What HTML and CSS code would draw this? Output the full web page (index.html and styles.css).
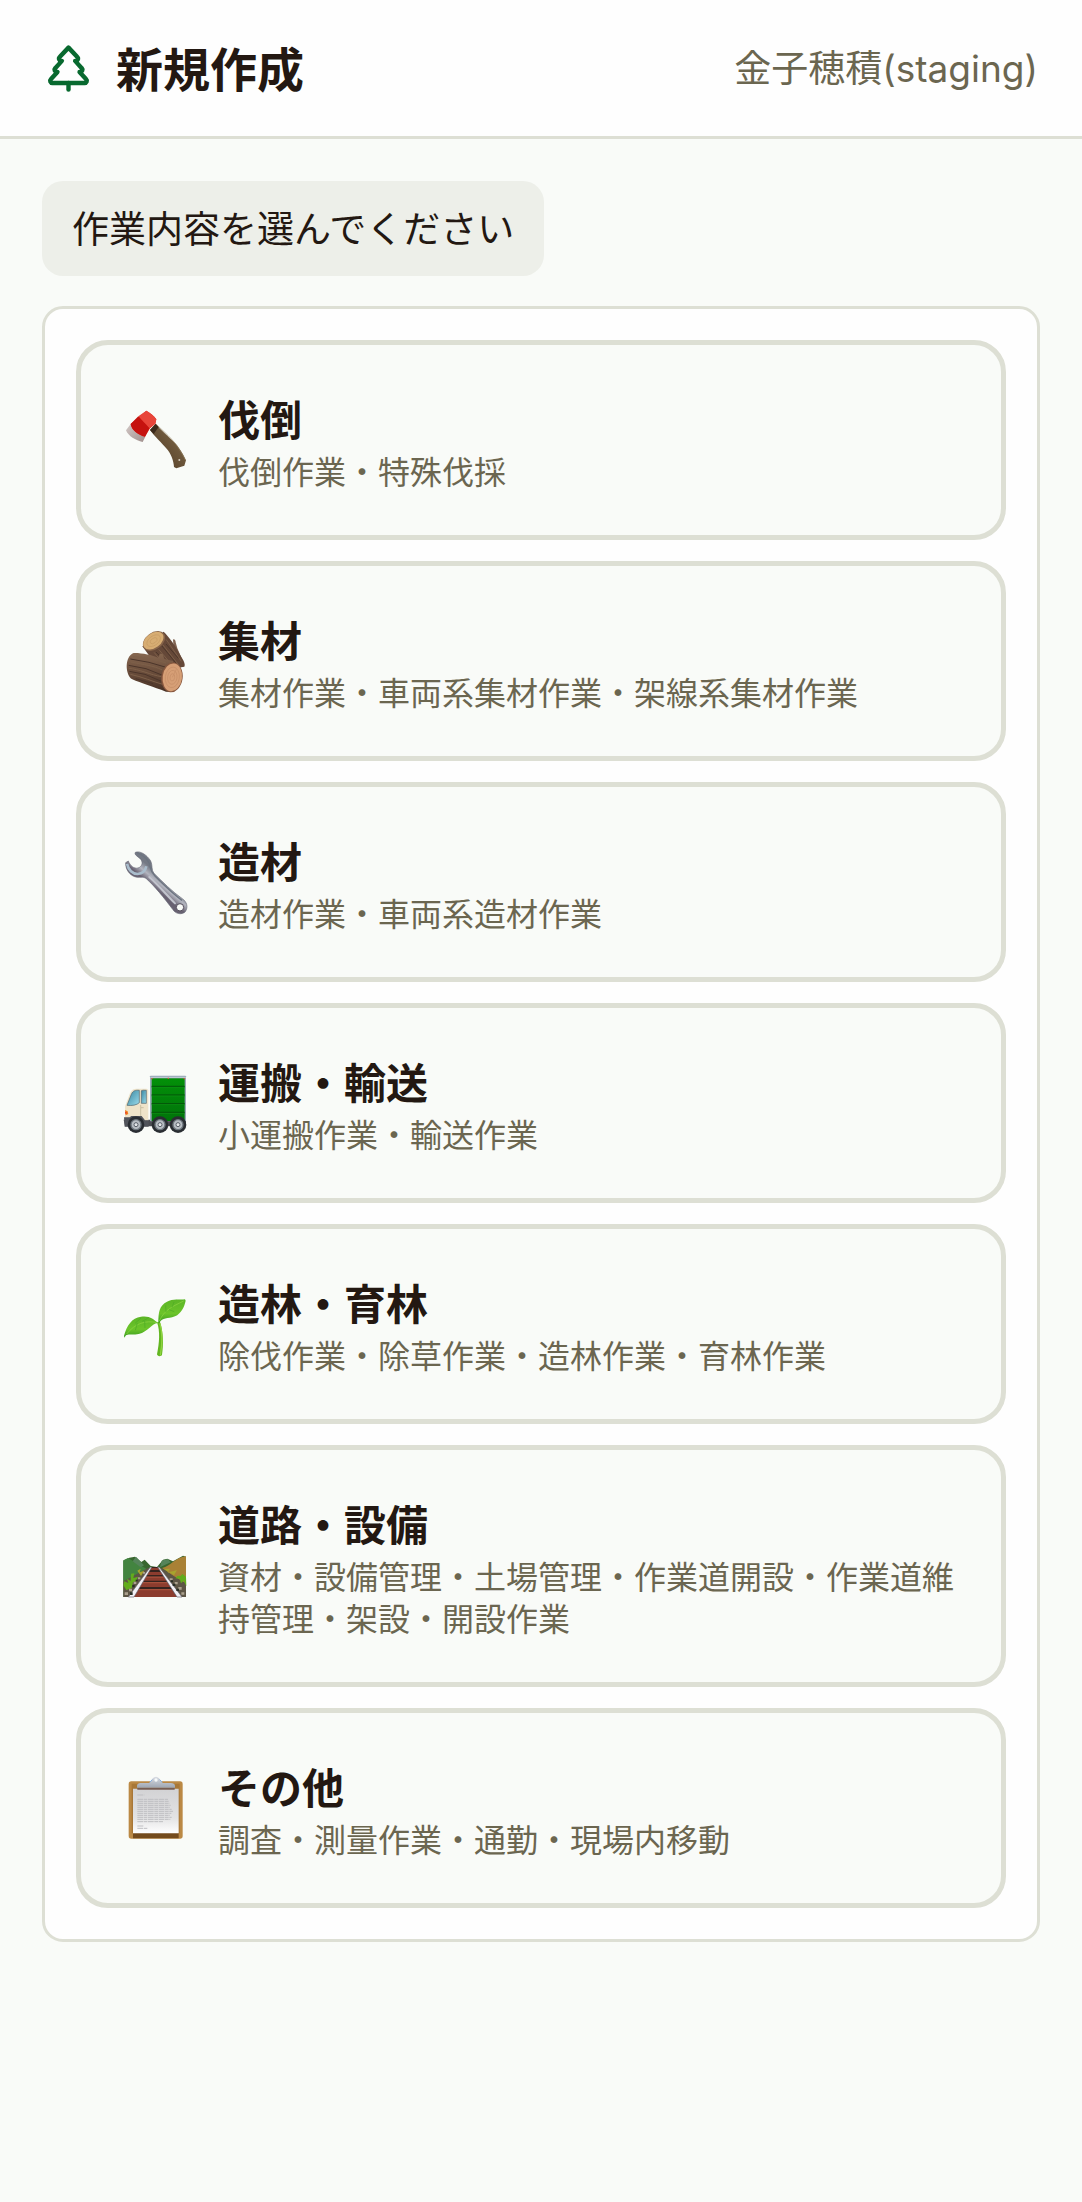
FILE: index.html
```html
<!DOCTYPE html>
<html lang="ja">
<head>
  <meta charset="utf-8">
  <meta name="viewport" content="width=device-width, initial-scale=1">
  <title>新規作成</title>
  <link rel="stylesheet" href="styles.css">
</head>
<body>
  <header class="header">
    <svg class="header-icon" viewBox="0 0 24 24" aria-hidden="true">
      <path d="m17 14 3 3.3a1 1 0 0 1-.7 1.7H4.7a1 1 0 0 1-.7-1.7L7 14h-.3a1 1 0 0 1-.7-1.7L9 9h-.2A1 1 0 0 1 8 7.3L12 3l4 4.3a1 1 0 0 1-.8 1.7H15l3 3.3a1 1 0 0 1-.7 1.7H17Z"/>
      <path d="M12 22v-3"/>
    </svg>
    <h1 class="header-title">新規作成</h1>
    <span class="user-name">金子穂積<span class="user-env">(staging)</span></span>
  </header>

  <main class="content">
    <p class="message">作業内容を選んでください</p>

    <div class="panel">
      <button type="button" class="work-item">
        <svg class="work-icon" viewBox="38 58 189 189" aria-hidden="true">
          <defs>
            <linearGradient id="axeHandle" x1="0" y1="1" x2="1" y2="0">
              <stop offset="0" stop-color="#4b3520"/>
              <stop offset="1" stop-color="#86704f"/>
            </linearGradient>
            <linearGradient id="axeEdge" x1="0" y1="0" x2="1" y2="1">
              <stop offset="0" stop-color="#d3c9c7"/>
              <stop offset="1" stop-color="#a08f8c"/>
            </linearGradient>
          </defs>
          <path d="M119 121 136 102C150 120 175 140 196 162 212 181 222 200 227 212L222 228 198 236 191 232C190 211 181 191 169 177 154 160 132 139 119 121Z" fill="url(#axeHandle)"/>
          <path d="M119 121 136 102 145 112 130 133Z" fill="#3b2a1b"/>
          <path d="M137 103C160 126 187 148 203 173 213 188 221 203 225 211" fill="none" stroke="#93805f" stroke-width="3" opacity=".6"/>
          <circle cx="207" cy="211" r="3" fill="#d5cabb"/>
          <path d="M61 103C64 122 83 136 105 141L97 157C76 152 54 140 47 122Z" fill="url(#axeEdge)"/>
          <path d="M108 63C119 70 131 77 138 89L135 102 119 116 104 141C83 136 64 122 61 103Z" fill="#d8261c"/>
          <path d="M84 80 108 63C119 70 131 77 138 89L135 102 117 116C106 103 93 91 84 80Z" fill="#e8453a"/>
          <path d="M61 103 84 80C93 91 106 103 117 116L104 141C83 136 64 122 61 103Z" fill="#c5120f"/>
        </svg>
        <span class="work-text">
          <span class="work-title">伐倒</span>
          <span class="work-desc">伐倒作業・特殊伐採</span>
        </span>
      </button>

      <button type="button" class="work-item">
        <svg class="work-icon" viewBox="38 45 189 189" aria-hidden="true">
          <defs>
            <linearGradient id="logBark" x1="0" y1="0" x2="0" y2="1">
              <stop offset="0" stop-color="#866750"/>
              <stop offset=".5" stop-color="#6a4d3b"/>
              <stop offset="1" stop-color="#463025"/>
            </linearGradient>
          </defs>
          <path d="M188 74C192 71 196 76 196 82L201 100 214 130 200 126 190 100Z" fill="#806452"/>
          <path d="M96 94 160 50C175 65 197 93 210 121 220 137 226 148 222 155L195 160 130 140Z" fill="#654838"/>
          <path d="M131 112 172 160M145 103 189 155M158 90 205 150M167 73 213 139" stroke="#7d5f48" stroke-width="3"/>
          <path d="M137 111 177 153M154 92 199 147M167 87 204 130" stroke="#4c362a" stroke-width="3"/>
          <ellipse cx="131" cy="78" rx="37" ry="25" transform="rotate(-36 131 78)" fill="#876449"/>
          <ellipse cx="129" cy="77" rx="34" ry="22" transform="rotate(-36 129 77)" fill="#d7ad73"/>
          <ellipse cx="130" cy="77" rx="23" ry="14" transform="rotate(-36 130 77)" fill="none" stroke="#c79b63" stroke-width="2"/>
          <ellipse cx="130" cy="77" rx="12" ry="7" transform="rotate(-36 130 77)" fill="none" stroke="#c79b63" stroke-width="2"/>
          <path d="M70 114C91 113 126 120 143 128L149 116 157 117 162 132 188 138 187 231 167 230C129 216 91 204 66 193 44 181 42 124 70 114Z" fill="url(#logBark)"/>
          <path d="M68 125C104 127 139 134 167 144M62 141C102 150 128 151 156 165M55 160C85 162 123 180 153 185M60 178C95 185 128 200 157 208" fill="none" stroke="#7d6049" stroke-width="3"/>
          <path d="M60 132 116 142 164 156M55 151 107 161 157 181M57 169 104 178 158 201M76 191 128 206" fill="none" stroke="#4b352a" stroke-width="3"/>
          <ellipse cx="185" cy="187" rx="32" ry="45" transform="rotate(8 185 187)" fill="#88583f"/>
          <ellipse cx="186" cy="187" rx="29" ry="42" transform="rotate(8 186 187)" fill="#d69f76"/>
          <g fill="none" stroke="#c48d66" stroke-width="2">
            <ellipse cx="186" cy="187" rx="21" ry="31" transform="rotate(8 186 187)"/>
            <ellipse cx="186" cy="187" rx="14" ry="21" transform="rotate(8 186 187)"/>
            <ellipse cx="186" cy="187" rx="7" ry="11" transform="rotate(8 186 187)"/>
            <path d="M186 187 198 163"/>
          </g>
        </svg>
        <span class="work-text">
          <span class="work-title">集材</span>
          <span class="work-desc">集材作業・車両系集材作業・架線系集材作業</span>
        </span>
      </button>

      <button type="button" class="work-item">
        <svg class="work-icon" viewBox="38 47 189 189" aria-hidden="true">
          <defs>
            <linearGradient id="wrenchMetal" gradientUnits="userSpaceOnUse" x1="155" y1="125" x2="130" y2="155">
              <stop offset="0" stop-color="#747984"/>
              <stop offset=".5" stop-color="#b3b5bf"/>
              <stop offset="1" stop-color="#686171"/>
            </linearGradient>
          </defs>
          <path d="M75 51C90 45 111 60 121 77 127 90 123 103 130 113 155 138 187 170 216 190 230 200 234 215 225 229 215 239 196 237 187 222 163 190 132 151 108 130 99 122 87 129 73 124 56 118 45 100 46 82L54 77C59 90 70 101 83 98 94 95 99 83 92 73 87 66 79 64 74 56Z" fill="url(#wrenchMetal)" stroke="#696b78" stroke-width="2"/>
          <path d="M81 53C100 59 117 75 119 94 122 107 125 113 134 122 159 147 188 176 215 195" fill="none" stroke="#6c7480" stroke-width="4"/>
          <path d="M50 85C54 104 67 116 82 116 97 115 105 107 108 93" fill="none" stroke="#a9bdcc" stroke-width="8"/>
          <path d="M117 125C145 150 170 180 194 204" fill="none" stroke="#c2c4cd" stroke-width="6" stroke-linecap="round"/>
          <circle cx="209" cy="216" r="11" fill="#f9fbf8" stroke="#56505e" stroke-width="3"/>
        </svg>
        <span class="work-text">
          <span class="work-title">造材</span>
          <span class="work-desc">造材作業・車両系造材作業</span>
        </span>
      </button>

      <button type="button" class="work-item">
        <svg class="work-icon" viewBox="40 34 189 189" aria-hidden="true">
          <defs>
            <linearGradient id="truckGlass" x1="0" y1="0" x2="1" y2="1">
              <stop offset="0" stop-color="#35849e"/>
              <stop offset="1" stop-color="#9bdcec"/>
            </linearGradient>
            <linearGradient id="truckBox" x1="0" y1="0" x2="0" y2="1">
              <stop offset="0" stop-color="#039008"/>
              <stop offset="1" stop-color="#00730a"/>
            </linearGradient>
          </defs>
          <path d="M42 177H229V197H46Z" fill="#4b4d53"/>
          <rect x="121" y="45" width="108" height="137" rx="2" fill="#9ba9b8"/>
          <rect x="126" y="53" width="99" height="128" fill="url(#truckBox)"/>
          <path d="M126 77H225M126 103H225M126 129H225M126 155H225" stroke="#04510a" stroke-width="3"/>
          <path d="M126 80H225M126 106H225M126 132H225M126 158H225" stroke="#109016" stroke-width="2"/>
          <path d="M122 50H229" stroke="#c5ced9" stroke-width="3"/>
          <path d="M125 52h4v4h-4zM174 51h4v4h-4zM222 52h4v4h-4z" fill="#d05843"/>
          <path d="M46 137 61 98C66 86 73 84 83 84H111L116 88V180H46Z" fill="#eee3c9"/>
          <path d="M52 134 65 101C70 90 76 88 89 89V126C82 133 67 136 52 134Z" fill="url(#truckGlass)" stroke="#52636b" stroke-width="2"/>
          <path d="M95 90Q98 88 110 89V128H95Z" fill="url(#truckGlass)" stroke="#52636b" stroke-width="2"/>
          <path d="M93 133V173M94 141H102" stroke="#b9ad91" stroke-width="2"/>
          <path d="M46 148 54 152 56 160 48 164Z" fill="#f18020"/>
          <path d="M46 153 52 156 48 161Z" fill="#e52e22"/>
          <path d="M43 170H60L65 166H96L106 179H117V198H45Z" fill="#51545b"/>
          <circle cx="79" cy="192" r="25" fill="#292d32"/>
          <circle cx="151" cy="192" r="25" fill="#292d32"/>
          <circle cx="205" cy="192" r="25" fill="#292d32"/>
          <g fill="#b7bdc3" stroke="#6e777e" stroke-width="4">
            <circle cx="79" cy="192" r="15"/>
            <circle cx="151" cy="192" r="15"/>
            <circle cx="205" cy="192" r="15"/>
          </g>
          <g fill="#e4e7e9" stroke="#596069" stroke-width="3">
            <circle cx="79" cy="192" r="6"/>
            <circle cx="151" cy="192" r="6"/>
            <circle cx="205" cy="192" r="6"/>
          </g>
        </svg>
        <span class="work-text">
          <span class="work-title">運搬・輸送</span>
          <span class="work-desc">小運搬作業・輸送作業</span>
        </span>
      </button>

      <button type="button" class="work-item">
        <svg class="work-icon" viewBox="40 35 189 189" aria-hidden="true">
          <defs>
            <linearGradient id="leafGreen" x1="0" y1="0" x2="0" y2="1">
              <stop offset="0" stop-color="#5bb526"/>
              <stop offset=".6" stop-color="#6cc42a"/>
              <stop offset="1" stop-color="#389b20"/>
            </linearGradient>
          </defs>
          <path d="M142 123 151 122C161 150 162 190 157 220 155 226 143 226 142 219 149 185 152 151 142 123Z" fill="#62b620"/>
          <path d="M151 126C159 155 157 193 152 222" fill="none" stroke="#8fd43f" stroke-width="4"/>
          <path d="M145 125C127 124 117 151 87 158 67 162 57 157 49 162L44 169 43 163C52 132 66 110 94 106 119 102 132 113 145 125Z" fill="url(#leafGreen)"/>
          <path d="M146 125C146 93 149 72 172 61 189 52 211 56 226 54L228 58C224 77 215 96 196 105 172 114 159 107 149 125Z" fill="url(#leafGreen)"/>
          <path d="M141 124C109 116 76 126 51 158M149 119C164 85 190 75 222 59" fill="none" stroke="#8fd544" stroke-width="2"/>
          <path d="M76 126 94 110M98 120 114 111M83 125 77 147M105 119 106 140M169 92 168 72M187 78 193 62M178 85 194 91" stroke="#4ca926" stroke-width="2"/>
        </svg>
        <span class="work-text">
          <span class="work-title">造林・育林</span>
          <span class="work-desc">除伐作業・除草作業・造林作業・育林作業</span>
        </span>
      </button>

      <button type="button" class="work-item">
        <svg class="work-icon" viewBox="41 12 189 189" aria-hidden="true">
          <path d="M42 89 60 80 77 77 96 93 106 86 124 105 143 108 161 86 174 83 191 91 221 74 230 77V198H42Z" fill="#38662f"/>
          <path d="M42 88 56 81 116 116 87 132 42 151Z" fill="#438440"/>
          <path d="M80 77 104 103 94 109 70 91ZM157 89 175 84 184 94 152 109Z" fill="#55845a"/>
          <path d="M158 111C185 105 197 80 230 76V157L194 137Z" fill="#a98135"/>
          <path d="M42 151 116 111H155L230 158V198H42Z" fill="#5d5545"/>
          <path d="M124 108H146L205 198H66Z" fill="#37231e"/>
          <path d="M122 111H149L152 117H118ZM115 123H156L161 132H109ZM106 138H165L172 149H99ZM96 155H176L184 168H87ZM82 176H189L202 198H68Z" fill="#8c3c2e"/>
          <path d="M108 138H163M100 155H174M88 176H187" stroke="#b65b43" stroke-width="3"/>
          <path d="M123 108 57 198H74L127 109ZM145 108 203 198H218L150 109Z" fill="#f2f0f5" stroke="#676570" stroke-width="2"/>
          <path d="M42 163 45 151 57 156 53 143 64 150 65 128 75 127 72 141 86 137 80 151 71 154 67 172 51 177ZM231 166 223 149 215 157 211 143 198 142 205 134 214 135 219 129 230 137Z" fill="#62ac1c"/>
          <path d="M84 119 94 113 91 124 105 119 95 135ZM165 114 182 113 175 124 191 121 203 117 194 133Z" fill="#a7a52e"/>
          <path d="M73 152h8v7h-8zM86 139h7v6h-7zM59 173h9v8h-9zM46 184h10v8h-10zM181 142h9v6h-9zM196 153h9v7h-9zM207 168h10v8h-10zM216 184h9v7h-9zM101 123h6v5h-6z" fill="#aaa08d"/>
          <path d="M62 184h8v8h-8zM69 162h7v7h-7zM79 146h6v5h-6zM184 148h7v6h-7zM190 158h8v7h-8zM201 173h8v7h-8z" fill="#292e24"/>
        </svg>
        <span class="work-text">
          <span class="work-title">道路・設備</span>
          <span class="work-desc">資材・設備管理・土場管理・作業道開設・作業道維持管理・架設・開設作業</span>
        </span>
      </button>

      <button type="button" class="work-item">
        <svg class="work-icon" viewBox="38 47 189 189" aria-hidden="true">
          <defs>
            <linearGradient id="paperGray" x1="0" y1="0" x2="0" y2="1">
              <stop offset="0" stop-color="#d2d2d4"/>
              <stop offset=".65" stop-color="#e3e3e4"/>
              <stop offset="1" stop-color="#fff"/>
            </linearGradient>
            <linearGradient id="clipMetal" x1="0" y1="0" x2="0" y2="1">
              <stop offset="0" stop-color="#d9dde4"/>
              <stop offset="1" stop-color="#9ea6b2"/>
            </linearGradient>
          </defs>
          <rect x="55" y="60" width="162" height="172" rx="8" fill="#bb8945"/>
          <path d="M64 67H208V216H64Z" fill="#a87737"/>
          <path d="M68 215H205V231H68Z" fill="#744b1d"/>
          <path d="M68 82H205V216H68Z" fill="url(#paperGray)"/>
          <path d="M81 79H193V85H81Z" fill="#775e55"/>
          <path d="M80 79V73Q81 66 91 65H116C124 64 122 47 137 46 151 47 150 64 158 65H181Q193 66 194 73V79Z" fill="url(#clipMetal)"/>
          <path d="M118 63 126 55M148 55 156 63" stroke="#85aee0" stroke-width="3"/>
          <circle cx="137" cy="56" r="5" fill="#f7fafa"/>
          <path d="M81 101H102M81 114H173M81 120H176M81 126H178M81 132H181M81 138H179M81 144H184M81 150H188M81 156H183M81 162H179M81 168H184M81 174H180M81 181H158M81 194H101M81 201H113" stroke="#bfbfc2" stroke-width="3" stroke-dasharray="17 2 11 2"/>
        </svg>
        <span class="work-text">
          <span class="work-title">その他</span>
          <span class="work-desc">調査・測量作業・通勤・現場内移動</span>
        </span>
      </button>
    </div>
  </main>
</body>
</html>
```

FILE: styles.css
```css
* {
  box-sizing: border-box;
}

body {
  margin: 0;
  min-height: 100vh;
  background-color: #f9fbf8;
  color: #231812;
  font-family: "Noto Sans CJK JP", sans-serif;
}

.header {
  display: flex;
  align-items: center;
  gap: 21px;
  padding: 31px 44px 33px 42px;
  background-color: #fefefe;
  border-bottom: 3px solid #dddfd4;
}

.header-icon {
  flex-shrink: 0;
  width: 53px;
  height: 53px;
  fill: none;
  stroke: #08692f;
  stroke-width: 2;
  stroke-linecap: round;
  stroke-linejoin: round;
}

.header-title {
  flex: 1;
  margin: 0;
  font-size: 47px;
  font-weight: 700;
  line-height: 72px;
}

.user-name {
  color: #6b6650;
  font-size: 37px;
  line-height: 53px;
}

.user-env {
  font-family: Inter, "Noto Sans CJK JP", sans-serif;
}

.content {
  display: flex;
  flex-direction: column;
  align-items: flex-start;
  gap: 30px;
  padding: 42px;
}

.message {
  margin: 0;
  padding: 20px 30px 22px;
  background-color: #edefe9;
  border-radius: 21px;
  font-size: 37px;
  line-height: 53px;
}

.panel {
  display: flex;
  flex-direction: column;
  gap: 21px;
  width: 100%;
  padding: 31px;
  background-color: #fefefe;
  border: 3px solid #dddfd4;
  border-radius: 21px;
}

.work-item {
  display: flex;
  align-items: center;
  gap: 32px;
  width: 100%;
  padding: 42px;
  background-color: #f9fbf8;
  border: 5px solid #dddfd4;
  border-radius: 32px;
  color: inherit;
  font-family: inherit;
  text-align: left;
  cursor: pointer;
}

.work-item:hover {
  background-color: #edefe9;
}

.work-icon {
  flex-shrink: 0;
  width: 63px;
  height: 63px;
  overflow: visible;
}

.work-text {
  flex: 1;
  padding-bottom: 2px;
}

.work-title {
  display: block;
  font-size: 42px;
  font-weight: 700;
  line-height: 62px;
}

.work-desc {
  display: block;
  color: #6b6650;
  font-size: 32px;
  line-height: 42px;
}
```
